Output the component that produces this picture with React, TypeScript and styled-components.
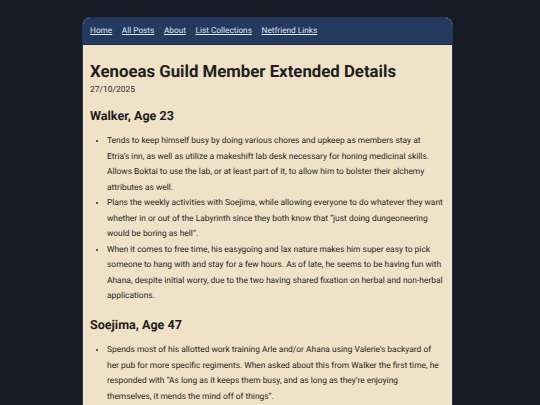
import React from "react";
import styled, { createGlobalStyle } from "styled-components";

const Global = createGlobalStyle`
  html, body { margin: 0; padding: 0; background: #161b26; }
  body {
    font-family: Roboto, "Liberation Sans", sans-serif;
    text-rendering: geometricPrecision;
    -webkit-font-smoothing: antialiased;
  }
`;

const Page = styled.div`
  min-height: 405px;
  padding-top: 17px;
  display: flex;
  justify-content: center;
`;

const Panel = styled.div`
  width: 371px;
  margin-right: 5px;
  border-radius: 8px 8px 0 0;
  overflow: hidden;
  background: #f0e2c6;
  border: 1px solid #22385a;
  border-bottom: none;
  box-sizing: border-box;
`;

const Nav = styled.nav`
  background: #233a5e;
  height: 27px;
  display: flex;
  align-items: center;
  gap: 9.6px;
  padding: 0 7px;
  border-bottom: 1px solid #1a2c48;
  box-sizing: border-box;
`;

const NavLink = styled.a`
  color: #dfe6f1;
  font-size: 8.25px;
  text-decoration: underline;
  text-underline-offset: 1px;
`;

const Content = styled.main`
  padding: 17px 8px 0 7px;
  color: #1e1e1e;
`;

const Title = styled.h1`
  margin: 0;
  font-size: 16.8px;
  font-weight: 700;
  line-height: 20px;
`;

const DateLine = styled.div`
  font-size: 8.45px;
  line-height: 12px;
  margin-top: 2px;
  color: #2a2a2a;
`;

const Heading = styled.h2<{ $gap?: number }>`
  margin: ${(p) => p.$gap ?? 13}px 0 0 0;
  font-size: 12.55px;
  font-weight: 700;
  line-height: 16px;
`;

const List = styled.ul`
  margin: 9px 0 0 0;
  padding-left: 17px;
  font-size: 8.42px;
  line-height: 15.55px;
  color: #262626;
`;

const Item = styled.li``;

const links = ["Home", "All Posts", "About", "List Collections", "Netfriend Links"];

export default function App() {
  return (
    <>
      <Global />
      <Page>
        <Panel>
          <Nav>
            {links.map((l) => (
              <NavLink key={l} href="#">{l}</NavLink>
            ))}
          </Nav>
          <Content>
            <Title>Xenoeas Guild Member Extended Details</Title>
            <DateLine>27/10/2025</DateLine>
            <Heading>Walker, Age 23</Heading>
            <List>
              <Item>
                Tends to keep himself busy by doing various chores and upkeep as members stay at Etria’s inn, as well as utilize a makeshift lab desk necessary for honing medicinal skills. Allows Boktai to use the lab, or at least part of it, to allow him to bolster their alchemy attributes as well.
              </Item>
              <Item>
                Plans the weekly activities with Soejima, while allowing everyone to do whatever they want whether in or out of the Labyrinth since they both know that “just doing dungeoneering would be boring as hell”.
              </Item>
              <Item>
                When it comes to free time, his easygoing and lax nature makes him super easy to pick someone to hang with and stay for a few hours. As of late, he seems to be having fun with Ahana, despite initial worry, due to the two having shared fixation on herbal and non-herbal applications.
              </Item>
            </List>
            <Heading $gap={13}>Soejima, Age 47</Heading>
            <List>
              <Item>
                Spends most of his allotted work training Arle and/or Ahana using Valerie’s backyard of her pub for more specific regiments. When asked about this from Walker the first time, he responded with “As long as it keeps them busy, and as long as they’re enjoying
                <br />
                themselves, it mends the mind off of things”.
              </Item>
            </List>
          </Content>
        </Panel>
      </Page>
    </>
  );
}
